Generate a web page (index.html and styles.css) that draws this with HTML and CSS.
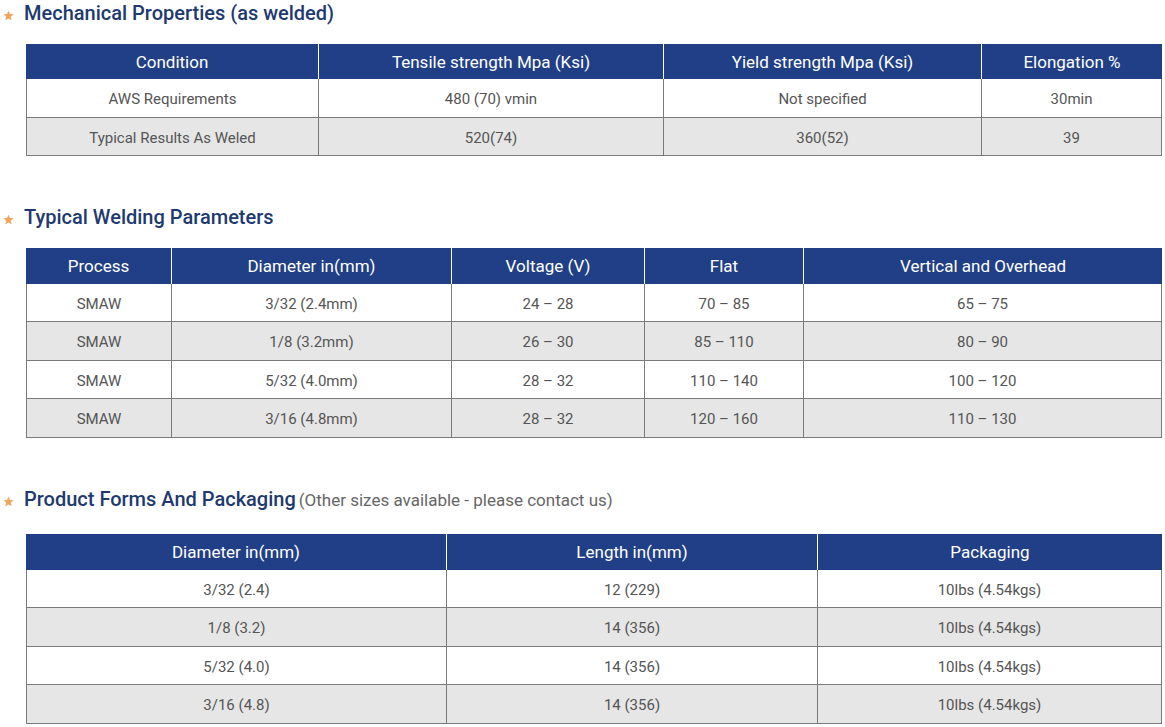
FILE: index.html
```html
<!DOCTYPE html>
<html lang="en">
<head>
<meta charset="utf-8">
<title>Welding Electrode Data</title>
<link rel="stylesheet" href="styles.css">
</head>
<body>
<main class="page">
  <section class="block">
    <h2 class="heading"><svg class="star" viewBox="0 0 10 10"><path d="M5 0.6 L6.3 3.6 L9.6 3.9 L7.1 6.1 L7.9 9.4 L5 7.7 L2.1 9.4 L2.9 6.1 L0.4 3.9 L3.7 3.6 Z"/></svg>Mechanical Properties (as welded)</h2>
    <table class="data data-first">
      <colgroup><col style="width:293px"><col style="width:345px"><col style="width:318px"><col></colgroup>
      <thead><tr><th>Condition</th><th>Tensile strength Mpa (Ksi)</th><th>Yield strength Mpa (Ksi)</th><th>Elongation %</th></tr></thead>
      <tbody>
        <tr><td>AWS Requirements</td><td>480 (70) vmin</td><td>Not specified</td><td>30min</td></tr>
        <tr><td>Typical Results As Weled</td><td>520(74)</td><td>360(52)</td><td>39</td></tr>
      </tbody>
    </table>
  </section>

  <section class="block">
    <h2 class="heading"><svg class="star" viewBox="0 0 10 10"><path d="M5 0.6 L6.3 3.6 L9.6 3.9 L7.1 6.1 L7.9 9.4 L5 7.7 L2.1 9.4 L2.9 6.1 L0.4 3.9 L3.7 3.6 Z"/></svg>Typical Welding Parameters</h2>
    <table class="data">
      <colgroup><col style="width:146px"><col style="width:280px"><col style="width:193px"><col style="width:159px"><col></colgroup>
      <thead><tr><th>Process</th><th>Diameter in(mm)</th><th>Voltage (V)</th><th>Flat</th><th>Vertical and Overhead</th></tr></thead>
      <tbody>
        <tr><td>SMAW</td><td>3/32 (2.4mm)</td><td>24 – 28</td><td>70 – 85</td><td>65 – 75</td></tr>
        <tr><td>SMAW</td><td>1/8 (3.2mm)</td><td>26 – 30</td><td>85 – 110</td><td>80 – 90</td></tr>
        <tr><td>SMAW</td><td>5/32 (4.0mm)</td><td>28 – 32</td><td>110 – 140</td><td>100 – 120</td></tr>
        <tr><td>SMAW</td><td>3/16 (4.8mm)</td><td>28 – 32</td><td>120 – 160</td><td>110 – 130</td></tr>
      </tbody>
    </table>
  </section>

  <section class="block block-last">
    <h2 class="heading"><svg class="star" viewBox="0 0 10 10"><path d="M5 0.6 L6.3 3.6 L9.6 3.9 L7.1 6.1 L7.9 9.4 L5 7.7 L2.1 9.4 L2.9 6.1 L0.4 3.9 L3.7 3.6 Z"/></svg>Product Forms And Packaging<span class="note">(Other sizes available - please contact us)</span></h2>
    <table class="data">
      <colgroup><col style="width:421px"><col style="width:371px"><col></colgroup>
      <thead><tr><th>Diameter in(mm)</th><th>Length in(mm)</th><th>Packaging</th></tr></thead>
      <tbody>
        <tr><td>3/32 (2.4)</td><td>12 (229)</td><td>10lbs (4.54kgs)</td></tr>
        <tr><td>1/8 (3.2)</td><td>14 (356)</td><td>10lbs (4.54kgs)</td></tr>
        <tr><td>5/32 (4.0)</td><td>14 (356)</td><td>10lbs (4.54kgs)</td></tr>
        <tr><td>3/16 (4.8)</td><td>14 (356)</td><td>10lbs (4.54kgs)</td></tr>
      </tbody>
    </table>
  </section>
</main>
</body>
</html>
```
FILE: styles.css
```css
* { box-sizing: border-box; }
html, body { margin: 0; padding: 0; background: #fff; }
body {
  font-family: Roboto, "Liberation Sans", Arial, sans-serif;
  color: #555;
}
.page {
  width: 1165px;
}
.block { margin-bottom: 48px; }
.block-last { margin-bottom: 0; }
.heading {
  display: flex;
  align-items: center;
  margin: 0 0 18px 0;
  height: 26px;
  font-size: 20px;
  font-weight: 500;
  color: #1e3a6f;
  line-height: 26px;
  white-space: nowrap;
}
.block-last .heading { margin-bottom: 22px; }
.star {
  width: 11px;
  height: 11px;
  margin: 5px 10px 0 3px;
  fill: #f2a55a;
  flex: none;
}
.note {
  font-size: 17px;
  font-weight: 400;
  color: #666;
  margin-left: 3px;
  position: relative;
  top: 1px;
}
.data {
  margin-left: 26px;
  width: 1136px;
  table-layout: fixed;
  border-collapse: separate;
  border-spacing: 0;
}
.data th {
  background: #213f86;
  color: #fff;
  font-weight: 400;
  font-size: 17px;
  height: 36px;
  padding: 0;
  text-align: center;
  border-right: 1px solid #fff;
}
.data th:last-child { border-right: 0; }
.data td {
  height: 38px;
  padding: 2px 0 0 0;
  font-size: 15px;
  color: #555;
  text-align: center;
  border-right: 1px solid #7a7a7a;
  border-bottom: 1px solid #7a7a7a;
}
.data tbody tr:nth-child(even) td { height: 39px; }
.data td:first-child { border-left: 1px solid #7a7a7a; }
.data tbody tr:nth-child(even) td { background: #e6e6e6; }

.data-first th { height: 35px; }
.data-first tbody tr:nth-child(odd) td { height: 39px; }
.data-first tbody tr:nth-child(even) td { height: 38px; }
```
